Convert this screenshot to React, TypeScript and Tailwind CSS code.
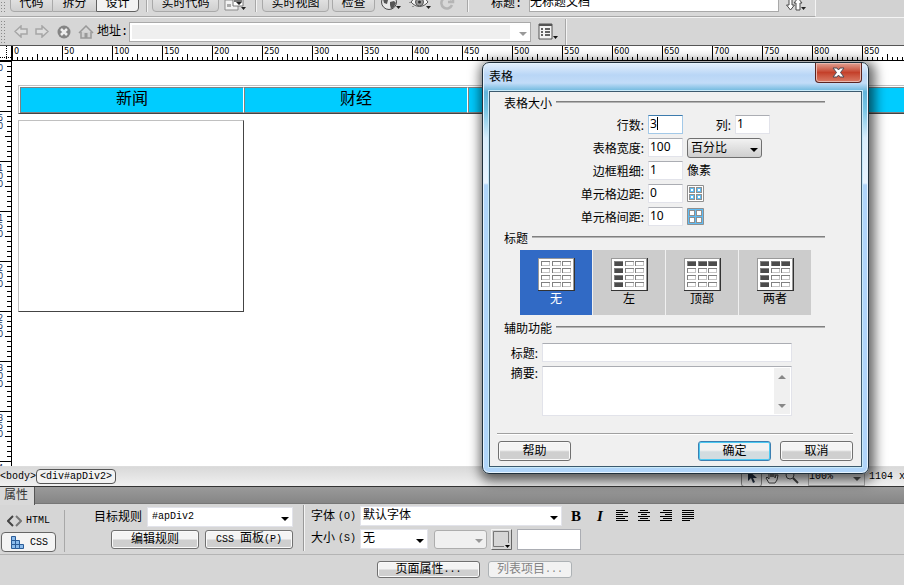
import type { ReactNode, SelectHTMLAttributes } from 'react';

const FONT = "font-['Liberation_Mono','Noto_Sans_CJK_SC',monospace]";
const DIALOG_FONT = "font-['Noto_Sans','Noto_Sans_CJK_SC',sans-serif]";

const toolButton =
  'h-[22px] shrink-0 border border-[#a9a9a9] bg-linear-to-b from-[#eee] to-[#cfcfcf] pt-[5px] text-[12px] leading-[16px]';
const panelButton =
  'flex shrink-0 items-center justify-center rounded-[3px] border border-[#707070] bg-linear-to-b from-[#f4f4f4] from-45% to-[#cfcfcf] to-55% text-[12px] leading-[16px] shadow-[inset_0_0_0_1px_#fafafa]';
const fieldInput =
  'h-[19px] w-[35px] border border-[#e2e3ea] border-t-[#abadb3] bg-white pb-[2px] pl-[1px] text-[12px] leading-[16px] outline-none';

const columns = Array.from({ length: 18 }, (_, i) => i * 50);
const rows = Array.from({ length: 9 }, (_, i) => i * 50);
const minor = [5, 10, 15, 20, 30, 35, 40, 45];

function Grip() {
  return (
    <svg width="6" height="22" className="shrink-0" fill="#8a8a8a">
      {Array.from({ length: 8 }, (_, i) => (
        <g key={i}>
          <rect x="1" y={i * 3} width="1" height="1" />
          <rect x="4" y={i * 3} width="1" height="1" />
        </g>
      ))}
    </svg>
  );
}

function Separator() {
  return <span className="h-[26px] w-[2px] shrink-0 border-l border-[#a8a8a8] bg-[#f4f4f4]" />;
}

interface DropdownProps extends SelectHTMLAttributes<HTMLSelectElement> {
  value: string;
  box: string;
  arrow?: string;
}

function Dropdown({ value, box, arrow = '#000', ...rest }: DropdownProps) {
  return (
    <span className="relative flex shrink-0">
      <select {...rest} defaultValue={value} className={`appearance-none leading-[16px] outline-none ${box}`}>
        <option>{value}</option>
      </select>
      <svg width="8" height="4" className="pointer-events-none absolute top-1/2 right-[4px]" fill={arrow}>
        <path d="M0 0h8L4 4z" />
      </svg>
    </span>
  );
}

function TopToolbar() {
  return (
    <header className="flex h-[17px] items-end overflow-hidden bg-[#d2d2d2]">
      <div className="flex h-[26px] shrink-0 items-end border-r border-b border-[#a8a8a8] border-r-[#f4f4f4] bg-[#d8d8d8] pb-[4px]">
        <Grip />
        <div className="ml-[4px] flex shrink-0">
          <button className={`${toolButton} w-[43px] rounded-bl-[4px]`}>代码</button>
          <button className={`${toolButton} w-[43px] border-x-0`}>拆分</button>
          <button className="h-[22px] w-[43px] shrink-0 rounded-br-[4px] border border-[#606060] bg-[#f3f3f3] pt-[5px] text-[12px] leading-[16px]">
            设计
          </button>
        </div>
        <span className="w-[7px]" />
        <Separator />
        <button className={`${toolButton} ml-[4px] w-[67px] rounded-[4px]`}>实时代码</button>
        <button aria-label="检查浏览器兼容性" className="ml-[5px] w-[24px] shrink-0">
          <svg width="24" height="14" viewBox="0 0 24 14">
            <path d="M1 2h13v10H1z" fill="#f2f2f2" stroke="#8b8b8b" />
            <path d="M3 6h4v3H3z" fill="#aaa" />
            <path d="M9 1h10v7H9z" fill="#fff" stroke="#777" />
            <path d="M10 2h8v2h-8z" fill="#777" />
            <path d="M12 4h6l-3 3zM17 9h5l-2.500 3z" fill="#222" />
          </svg>
        </button>
        <span className="w-[7px]" />
        <Separator />
        <button className={`${toolButton} ml-[5px] w-[67px] rounded-[4px]`}>实时视图</button>
        <button className={`${toolButton} ml-[3px] w-[43px] rounded-[4px]`}>检查</button>
        <button aria-label="在浏览器中预览" className="ml-[6px] shrink-0">
          <svg width="22" height="18" viewBox="0 0 22 18">
            <circle cx="8" cy="8" r="7.500" fill="#e8e8e8" stroke="#4a4a4a" />
            <path d="M2 5c3-4 6-3 7-2l-2 3-1 4-3-1zM9 8l4-1 2 2-2 4-3 2-1-4zM11 2l3 3-2 1z" fill="#555" />
            <path d="M15 12h5l-2.500 3z" fill="#222" />
          </svg>
        </button>
        <button aria-label="可视化助理" className="ml-[6px] shrink-0">
          <svg width="24" height="18" viewBox="0 0 24 18" fill="none">
            <path d="M2 8c5-7 12-7 17 0-5 6-12 6-17 0z" fill="#f4f4f4" stroke="#555" />
            <circle cx="10.500" cy="8" r="4" fill="#999" stroke="#555" />
            <circle cx="10.500" cy="8" r="1.500" fill="#333" />
            <path d="M1 2v1M1 5v1M1 8v1M4 12v1" stroke="#555" />
            <path d="M17 12h5l-2.500 3z" fill="#222" />
          </svg>
        </button>
        <button aria-label="刷新" className="ml-[6px] shrink-0">
          <svg width="16" height="16" viewBox="0 0 16 16" fill="none" stroke="#b5b5b5" strokeWidth="2.500">
            <path d="M12.500 4A5.500 5.500 0 1 0 13 9M14 1v5H9" />
          </svg>
        </button>
        <span className="w-[12px]" />
        <Separator />
        <label htmlFor="doc-title" className="ml-[22px] w-[38px] shrink-0 text-[12px] leading-[16px]">
          标题:
        </label>
        <input
          id="doc-title"
          defaultValue="无标题文档"
          className="h-[22px] w-[250px] shrink-0 border border-[#a9a9a9] bg-white text-[12px] leading-[16px] outline-none"
        />
        <button aria-label="文件管理" className="mr-[8px] ml-[7px] shrink-0">
          <svg width="21" height="14" viewBox="0 0 21 14" fill="#fff" stroke="#4a4a4a">
            <path d="M3 0h3v7h2.500l-4 5-4-5H3zM10 12V5H8l4-5 4 5h-2v7z" />
            <path d="M15 9h5l-2.500 3z" fill="#222" stroke="none" />
          </svg>
        </button>
      </div>
    </header>
  );
}

function AddressBar() {
  return (
    <nav className="flex h-[28px] items-center border-t border-[#f4f4f4] bg-[#d6d6d6]">
      <Grip />
      <button aria-label="后退" className="ml-[8px]">
        <svg width="14" height="13" viewBox="0 0 14 13" fill="#dedede" stroke="#a6a6a6" strokeWidth="1.500">
          <path d="M1 6.500 7 1v3h6v5H7v3z" />
        </svg>
      </button>
      <button aria-label="前进" className="ml-[7px]">
        <svg width="14" height="13" viewBox="0 0 14 13" fill="#dedede" stroke="#a6a6a6" strokeWidth="1.500">
          <path d="M13 6.500 7 1v3H1v5h6v3z" />
        </svg>
      </button>
      <button aria-label="停止" className="ml-[8px]">
        <svg width="14" height="14" viewBox="0 0 14 14">
          <circle cx="7" cy="7" r="6.500" fill="#858585" />
          <path d="m4 4 6 6M10 4l-6 6" stroke="#eee" strokeWidth="2.500" />
        </svg>
      </button>
      <button aria-label="主页" className="ml-[7px]">
        <svg width="16" height="14" viewBox="0 0 16 14" fill="#d0d0d0" stroke="#999" strokeWidth="1.500">
          <path d="M3 7v6h10V7" />
          <path d="M1 8l7-7 7 7" fill="none" />
          <path d="M6.500 8h3v5h-3z" fill="#999" stroke="none" />
        </svg>
      </button>
      <label htmlFor="address" className="ml-[3px] w-[32px] shrink-0 text-[12px] whitespace-nowrap">
        地址:
      </label>
      <Dropdown
        id="address"
        value=""
        arrow="#999"
        box="h-[20px] w-[402px] border border-[#a9a9a9] bg-[#efefef] shadow-[inset_-20px_0_0_#fff,inset_0_0_0_2px_#fff]"
      />
      <button aria-label="选项" className="ml-[7px]">
        <svg width="21" height="18" viewBox="0 0 21 18">
          <path d="M1 1h13v15H1z" fill="#f4f4f4" stroke="#555" />
          <path d="M1 1h13v2H1z" fill="#555" />
          <path d="M3 6h2M7 6h5M3 9h2M7 9h5M3 12h2M7 12h5" stroke="#333" strokeWidth="1.500" />
          <path d="M15 13h5l-2.500 3z" fill="#111" />
        </svg>
      </button>
      <span className="w-[6px]" />
      <Separator />
    </nav>
  );
}

function HorizontalRuler() {
  return (
    <div className="flex h-[16px] shrink-0 overflow-hidden border-t border-[#555] bg-white">
      <svg width="12" height="15" className="shrink-0">
        <path d="M6.500 0v15M0 11.500h12" stroke="#000" strokeDasharray="1 1" />
        <path d="M11.500 0v15M0 14.500h12" stroke="#000" />
      </svg>
      {columns.map((n) => (
        <div key={n} className="relative w-[50px] shrink-0">
          <svg width="50" height="15" className="absolute inset-0" fill="#000">
            <rect width="1" height="15" />
            <rect x="25" y="8" width="1" height="7" />
            {minor.map((m) => (
              <rect key={m} x={m} y="11" width="1" height="4" />
            ))}
            <rect y="14" width="50" height="1" />
          </svg>
          <span className="block pl-[2px] font-['DejaVu_Sans_Condensed','DejaVu_Sans',sans-serif] text-[9px] leading-[10px]">{n}</span>
        </div>
      ))}
    </div>
  );
}

function VerticalRuler() {
  return (
    <div className="flex w-[12px] shrink-0 flex-col overflow-hidden border-r border-black bg-white">
      {rows.map((n) => (
        <div key={n} className="relative h-[50px] shrink-0">
          <svg width="11" height="50" className="absolute inset-0" fill="#000">
            <rect width="11" height="1" />
            <rect x="5" y="25" width="6" height="1" />
            {minor.map((m) => (
              <rect key={m} x="7" y={m} width="4" height="1" />
            ))}
          </svg>
          <span className="-ml-[2px] block w-[6px] pt-[3px] font-['DejaVu_Sans_Condensed','DejaVu_Sans',sans-serif] text-[9px] leading-[8px] break-all text-[#16305a]">
            {n}
          </span>
        </div>
      ))}
    </div>
  );
}

function Canvas() {
  return (
    <main className="min-w-0 flex-1 overflow-hidden bg-white pt-[24px] pl-[6px]">
      <table className="w-[900px] table-fixed border-separate border-spacing-0 border border-[#c0c0c0] border-b-[#444] p-[1px] pb-0">
        <tbody>
          <tr>
            {['新闻', '财经', '', ''].map((name, i) => (
              <td
                key={i}
                className="h-[26px] border border-[#808080] border-r-white bg-[#00ccff] p-0 text-center text-[16px] leading-[24px]"
              >
                {name}
              </td>
            ))}
          </tr>
        </tbody>
      </table>
      <div className="mt-[6px] h-[192px] w-[226px] border border-[#444] border-t-[#c0c0c0] border-l-[#c0c0c0]" />
    </main>
  );
}

function StatusBar() {
  return (
    <footer className="flex h-[20px] shrink-0 items-center overflow-hidden border-t border-[#ddd] bg-linear-to-b from-[#d9d9d9] to-[#f0f0f0] text-[10px] whitespace-nowrap">
      <button className="w-[36px] shrink-0">&lt;body&gt;</button>
      <button className="flex h-[15px] w-[80px] shrink-0 items-center justify-center rounded-[4px] border border-[#555] bg-[#f2f2f2] leading-[12px]">
        &lt;div#apDiv2&gt;
      </button>
      <span className="flex-1" />
      <button aria-label="选取工具" className="flex h-[20px] w-[21px] items-center justify-center rounded-b-[3px] border border-[#888] bg-[#e6e6e6]">
        <svg width="10" height="14" viewBox="0 0 10 14">
          <path d="M1 0v11l3-3 2 5 2-1-2-4h4z" fill="#222f40" />
        </svg>
      </button>
      <button aria-label="手形工具" className="ml-[3px]">
        <svg width="14" height="14" viewBox="0 0 14 14" fill="#f4f4f4" stroke="#444">
          <path d="M4 13 1 8l1-1 2 2V3h2v4-5h2v5-4h2v5l1-3h2l-1 5-2 3z" />
        </svg>
      </button>
      <button aria-label="缩放工具" className="ml-[6px]">
        <svg width="14" height="14" viewBox="0 0 14 14" fill="#eee" stroke="#444">
          <circle cx="5" cy="5" r="4" />
          <path d="m8 8 5 5" strokeWidth="2" />
        </svg>
      </button>
      <span className="ml-[9px] flex">
        <Dropdown
          aria-label="缩放比率"
          value="100%"
          arrow="#555"
          box="h-[18px] w-[57px] border border-[#aaa] bg-[#ececec] pr-[12px] text-[10px]"
        />
      </span>
      <span className="ml-[4px] w-[35px] shrink-0">1104 x</span>
    </footer>
  );
}

function AlignIcon({ lines }: { lines: number[][] }) {
  return (
    <svg width="12" height="12" fill="#000">
      {lines.map(([x, w], i) => (
        <rect key={i} x={x} y={i * 2} width={w} height="1" />
      ))}
    </svg>
  );
}

const alignments = [
  { label: '左对齐', lines: [[0, 9], [0, 12], [0, 7], [0, 12], [0, 9], [0, 12]] },
  { label: '居中对齐', lines: [[2, 8], [0, 12], [3, 6], [0, 12], [2, 8], [0, 12]] },
  { label: '右对齐', lines: [[3, 9], [0, 12], [5, 7], [0, 12], [3, 9], [0, 12]] },
  { label: '两端对齐', lines: [[0, 12], [0, 12], [0, 12], [0, 12], [0, 12], [0, 8]] },
];

function Properties() {
  const field = 'border border-[#e2e3ea] bg-white pl-[2px] text-[12px]';
  return (
    <section className="shrink-0 bg-[#d6d6d6]">
      <div className="flex h-[18px] border-t border-b border-[#333] border-b-[#777] bg-linear-to-b from-[#9a9a9a] to-[#868686]">
        <h2 className="h-[18px] w-[35px] border-r border-[#555] bg-[#d9d9d9] pl-[4px] text-[12px] leading-[18px] text-[#333]">属性</h2>
      </div>
      <div className="flex h-[51px] items-start border-b border-[#b4b4b4]">
        <div className="flex w-[57px] shrink-0 flex-col gap-[1px] pt-[7px] pl-[1px]">
          <button className="flex h-[20px] items-center gap-[4px] pl-[6px] text-[10px] leading-[16px]">
            <svg width="15" height="12" viewBox="0 0 15 12" fill="none" stroke="#444" strokeWidth="2">
              <path d="M6 1 1 6l5 5" />
              <path d="m9 1 5 5-5 5" stroke="#777" />
            </svg>
            HTML
          </button>
          <button className="flex h-[20px] w-[55px] items-center gap-[5px] rounded-[4px] border border-[#666] bg-[#f4f4f4] pl-[9px] text-[10px]">
            <svg width="14" height="13" viewBox="0 0 14 13" fill="#8cbcec" stroke="#2b5c98">
              <path d="M.5.5h4v4h-4zM.5 4.500h4v4h-4zM.5 8.500h4v4h-4zM4.500 4.500h4v4h-4zM4.500 8.500h4v4h-4zM8.500 8.500h4v4h-4z" />
            </svg>
            CSS
          </button>
        </div>
        <span className="mt-[6px] ml-[7px] h-[42px] w-[1px] shrink-0 bg-[#a8a8a8]" />
        <div className="flex w-[238px] shrink-0 flex-col items-end gap-[3px] pt-[3px] pr-[10px]">
          <div className="flex items-center gap-[5px]">
            <label htmlFor="rule" className="pt-[2px] text-[12px] leading-[18px]">
              目标规则
            </label>
            <Dropdown
              id="rule"
              value="#apDiv2"
              box="h-[20px] w-[146px] border border-[#e2e3ea] bg-white pl-[4px] text-[10px]"
            />
          </div>
          <div className="flex gap-[6px]">
            <button className={`${panelButton} h-[19px] w-[88px]`}>编辑规则</button>
            <button className={`${panelButton} h-[19px] w-[88px] gap-[6px]`}>
              <span className="text-[10px]">CSS</span>
              <span>
                面板<span className="text-[10px]">(P)</span>
              </span>
            </button>
          </div>
        </div>
        <span className="mt-[1px] h-[46px] w-[2px] shrink-0 border-l border-[#999] bg-[#f4f4f4]" />
        <div className="grid gap-y-[3px] pt-[2px] pl-[6px]">
          <div className="flex h-[20px] items-center">
            <label htmlFor="font" className="flex w-[49px] items-center gap-[3px] pt-[2px] text-[12px] leading-[18px]">
              <span>字体</span>
              <span className="text-[10px]">(O)</span>
            </label>
            <Dropdown id="font" value="默认字体" box={`h-[20px] w-[202px] ${field}`} />
            <button className="ml-[6px] w-[16px] font-['Liberation_Serif',serif] text-[15px] leading-[16px] font-black">B</button>
            <button className="ml-[8px] w-[16px] font-['Liberation_Serif',serif] text-[15px] leading-[16px] font-bold italic">I</button>
            <div className="ml-[8px] flex gap-[10px]">
              {alignments.map((a) => (
                <button key={a.label} aria-label={a.label}>
                  <AlignIcon lines={a.lines} />
                </button>
              ))}
            </div>
          </div>
          <div className="flex h-[20px] items-center">
            <label htmlFor="size" className="flex w-[49px] items-center gap-[3px] text-[12px] leading-[18px]">
              <span>大小</span>
              <span className="text-[10px]">(S)</span>
            </label>
            <Dropdown id="size" value="无" box={`h-[20px] w-[68px] ${field}`} />
            <span className="w-[6px]" />
            <Dropdown
              aria-label="单位"
              value=""
              disabled
              arrow="#999"
              box="h-[19px] w-[53px] rounded-[3px] border border-[#adadad] bg-[#f0f0f0]"
            />
            <button aria-label="文本颜色" className="ml-[4px]">
              <svg width="21" height="21" viewBox="0 0 21 21">
                <path d="M.5 20.500V.5h20" fill="none" stroke="#f4f4f4" />
                <path d="M20.500.5v20H.5" fill="none" stroke="#666" />
                <path d="M2.500 2.500h15v15h-15z" fill="#d6d6d6" stroke="#777" />
                <path d="M13 14h7v6h-7z" fill="#d6d6d6" />
                <path d="M14 16h5l-2.500 3z" />
              </svg>
            </button>
            <input aria-label="颜色值" className="ml-[5px] h-[21px] w-[64px] border border-[#abadb3] bg-white outline-none" />
          </div>
        </div>
      </div>
      <div className="flex gap-[8px] pt-[6px] pb-[7px] pl-[377px]">
        <button className={`${panelButton} h-[17px] w-[103px]`}>
          页面属性<span className="text-[10px]">...</span>
        </button>
        <button
          disabled
          className="flex h-[17px] w-[84px] items-center justify-center rounded-[3px] border border-[#adb2b5] bg-[#f2f2f2] text-[12px] leading-[16px] text-[#838383]"
        >
          列表项目<span className="text-[10px]">...</span>
        </button>
      </div>
    </section>
  );
}

function Legend({ children }: { children: ReactNode }) {
  return (
    <h3 className="mr-[36px] ml-[14px] flex h-[16px] items-center gap-[4px] text-[12px] leading-[16px]">
      {children}
      <span className="mb-[4px] h-[2px] flex-1 border-t border-[#808080] bg-[#b4b4b4]" />
    </h3>
  );
}

function Field({ id, label, value, focused, children }: { id: string; label: string; value: string; focused?: boolean; children?: ReactNode }) {
  return (
    <div className="flex h-[23px] items-center gap-[4px] pl-[14px]">
      <label htmlFor={id} className="w-[140px] pt-[2px] text-right text-[12px] leading-[16px]">
        {label}:
      </label>
      <span className="relative flex">
        <input
          id={id}
          defaultValue={value}
          className={
            focused
              ? 'h-[19px] w-[35px] border border-[#a3c9e8] border-t-[#3d7bad] bg-white pb-[2px] pl-[1px] text-[12px] leading-[16px] outline-none'
              : fieldInput
          }
        />
        {focused && <span className="absolute top-[2px] left-[9px] h-[13px] w-[1px] bg-black" />}
      </span>
      {children}
    </div>
  );
}

function SpacingIcon({ padding }: { padding?: boolean }) {
  return (
    <svg width="17" height="17" viewBox="0 0 17 17">
      <path d="M.5.5h16v16H.5z" fill={padding ? '#fff' : '#5fbdf5'} stroke="#8f8f8f" />
      {[2, 9].map((x) =>
        [2, 9].map((y) => (
          <g key={`${x}-${y}`}>
            <rect x={x + 0.5} y={y + 0.5} width="5" height="5" fill={padding ? '#5fbdf5' : '#fff'} stroke="#8f8f8f" />
            {padding && <rect x={x + 2} y={y + 2} width="2" height="2" fill="#fff" />}
          </g>
        )),
      )}
    </svg>
  );
}

function HeaderIcon({ left, top }: { left: boolean; top: boolean }) {
  return (
    <svg width="38" height="33" viewBox="-1 0 38 33">
      <path d="M0 0h37v33H0z" fill="#333" />
      <path d="M0 0h36v32H0z" fill="#999" />
      <path d="M1 1h34v31H1z" fill="#fff" />
      {[3, 10, 17, 24].map((y, r) =>
        [3, 14, 24].map((x, c) => {
          const dark = (left && c === 0) || (top && r === 0);
          return (
            <g key={`${r}-${c}`}>
              <rect x={x} y={y} width="9" height="5" fill={dark ? '#4c4c4c' : '#c4c4c4'} />
              <path d={`M${x} ${y}h9v1h-8v4h-1z`} fill="#808080" />
              {!dark && <rect x={x + 1} y={y + 1} width="7" height="3" fill="#fff" />}
            </g>
          );
        }),
      )}
    </svg>
  );
}

const headerOptions = [
  { label: '无', left: false, top: false },
  { label: '左', left: true, top: false },
  { label: '顶部', left: false, top: true },
  { label: '两者', left: true, top: true },
];

function TableDialog() {
  return (
    <div
      role="dialog"
      aria-label="表格"
      className={`absolute top-[62px] left-[482px] w-[387px] rounded-[7px] border border-[#20303c] bg-[linear-gradient(180deg,#e4f0fc_0,#b9d6f6_12px,#c2dcf8_20px,#62b4da_29px,#76c4e4_46px,#d9edfc_75px,#e9f4ff_120px,#b0d5fa_122px,#b0d5fa_100%)] px-[6px] pb-[6px] shadow-[inset_0_0_0_1px_#e6f4ff,2px_3px_12px_4px_rgba(0,0,0,0.6)] ${DIALOG_FONT}`}
    >
      <div className="flex h-[28px] items-start justify-between">
        <h2 className="pt-[6px] text-[12px] leading-[16px]">表格</h2>
        <button
          aria-label="关闭"
          className="flex h-[20px] w-[47px] items-center justify-center rounded-b-[4px] border border-t-0 border-[#5a2420] bg-linear-to-b from-[#e0a093] via-[#c4402a] via-50% to-[#d97a65] shadow-[inset_0_0_0_1px_#eab8ae]"
        >
          <svg width="13" height="11" viewBox="0 0 13 11">
            <path d="M1 1h4l1.500 2L8 1h4L8.500 5.500 12 10H8L6.500 8 5 10H1l3.500-4.500z" fill="#fff" stroke="#4d4a55" />
          </svg>
        </button>
      </div>
      <div className="border border-[#3c5a6e] bg-[#f0f0f0] pt-[4px] pb-[5px] shadow-[0_0_0_1px_#c9eaf9]">
        <Legend>表格大小</Legend>
        <div className="mt-[1px]">
          <Field id="rows" label="行数" value="3" focused>
            <label htmlFor="cols" className="w-[44px] pt-[2px] text-right text-[12px] leading-[16px]">
              列:
            </label>
            <input id="cols" defaultValue="1" className={fieldInput} />
          </Field>
          <Field id="width" label="表格宽度" value="100">
            <Dropdown
              aria-label="宽度单位"
              value="百分比"
              box="h-[20px] w-[75px] rounded-[3px] border border-[#707070] bg-linear-to-b from-[#f2f2f2] to-[#cfcfcf] pl-[3px] text-[12px]"
            />
          </Field>
          <Field id="border" label="边框粗细" value="1">
            <span className="text-[12px] leading-[16px]">像素</span>
          </Field>
          <Field id="padding" label="单元格边距" value="0">
            <SpacingIcon padding />
          </Field>
          <Field id="spacing" label="单元格间距" value="10">
            <SpacingIcon />
          </Field>
        </div>
        <div className="mt-[3px]">
          <Legend>标题</Legend>
        </div>
        <div className="mt-[3px] flex gap-[1px] pl-[30px]">
          {headerOptions.map((o, i) => (
            <button
              key={o.label}
              className={`flex h-[65px] w-[72px] flex-col items-center pt-[8px] text-[12px] leading-[16px] ${
                i === 0 ? 'bg-[#316ac5] text-white' : 'bg-[#ccc]'
              }`}
            >
              <HeaderIcon left={o.left} top={o.top} />
              {o.label}
            </button>
          ))}
        </div>
        <div className="mt-[6px]">
          <Legend>辅助功能</Legend>
        </div>
        <div className="mt-[6px] flex items-center gap-[4px] pl-[14px]">
          <label htmlFor="caption" className="w-[34px] pt-[2px] text-right text-[12px] leading-[16px]">
            标题:
          </label>
          <input id="caption" className="h-[19px] w-[250px] border border-[#e2e3ea] border-t-[#abadb3] bg-white outline-none" />
        </div>
        <div className="mt-[4px] flex items-start gap-[4px] pl-[14px]">
          <label htmlFor="summary" className="w-[34px] text-right text-[12px] leading-[16px]">
            摘要:
          </label>
          <span className="relative flex">
            <textarea
              id="summary"
              className="h-[50px] w-[250px] resize-none border border-[#e2e3ea] border-t-[#abadb3] bg-white outline-none"
            />
            <svg width="16" height="46" viewBox="0 0 16 46" className="absolute top-[2px] right-[2px]">
              <path d="M0 0h16v46H0z" fill="#f0f0f0" />
              <path d="m4 11 4-4 4 4zM4 36l4 4 4-4z" fill="#888" />
            </svg>
          </span>
        </div>
        <div className="mr-[8px] ml-[7px] mt-[17px] flex gap-[9px] border-t border-[#a0a0a0] pt-[7px] pl-[1px] shadow-[inset_0_1px_0_#fff]">
          <button className={`${panelButton} mr-auto h-[20px] w-[73px]`}>帮助</button>
          <button className="flex h-[20px] w-[73px] items-center justify-center rounded-[3px] border border-[#3c7fb1] bg-linear-to-b from-[#f2f2f2] from-45% to-[#d2dce0] to-55% text-[12px] leading-[16px] shadow-[inset_0_0_0_1px_#4bc9f2]">
            确定
          </button>
          <button className={`${panelButton} h-[20px] w-[73px]`}>取消</button>
        </div>
      </div>
    </div>
  );
}

export default function App() {
  return (
    <div className={`relative flex h-screen flex-col overflow-hidden bg-[#d6d6d6] text-black ${FONT}`}>
      <TopToolbar />
      <AddressBar />
      <HorizontalRuler />
      <div className="flex min-h-0 flex-1">
        <VerticalRuler />
        <Canvas />
      </div>
      <StatusBar />
      <Properties />
      <TableDialog />
    </div>
  );
}
